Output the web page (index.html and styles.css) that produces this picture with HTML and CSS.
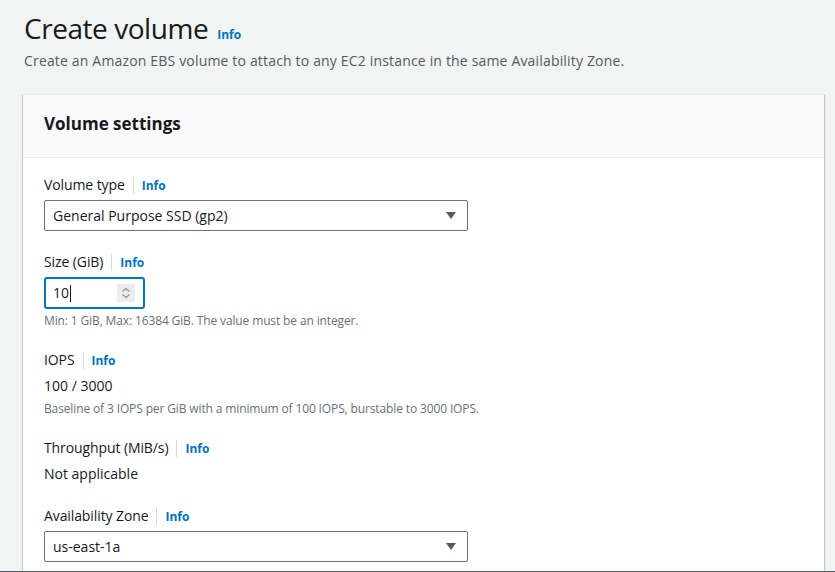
FILE: index.html
```html
<!DOCTYPE html>
<html lang="en">
<head>
<meta charset="utf-8">
<title>Create volume</title>
<link rel="stylesheet" href="styles.css">
</head>
<body>
<div class="app">
  <main class="content">
    <header class="page-head">
      <h1 class="title">Create volume <a class="info info-title" href="#">Info</a></h1>
      <p class="desc">Create an Amazon EBS volume to attach to any EC2 instance in the same Availability Zone.</p>
    </header>
    <section class="card">
      <div class="card-head">
        <h2 class="card-title">Volume settings</h2>
      </div>
      <div class="card-body">
        <div class="field">
          <div class="label-row"><span class="label">Volume type</span><span class="divider"></span><a class="info" href="#">Info</a></div>
          <div class="select">
            <span class="select-text">General Purpose SSD (gp2)</span>
            <svg class="caret" width="10" height="7" viewBox="0 0 10 7"><path d="M0 0H10L5 7Z" fill="#545b64"/></svg>
          </div>
        </div>
        <div class="field">
          <div class="label-row"><span class="label">Size (GiB)</span><span class="divider"></span><a class="info" href="#">Info</a></div>
          <div class="input focused">
            <span class="input-text">10</span><span class="cursor"></span>
            <span class="spinner">
              <svg width="18" height="18" viewBox="0 0 18 18"><path d="M5.5 7.5L9 4.5L12.5 7.5M5.5 10.5L9 13.5L12.5 10.5" fill="none" stroke="#879596" stroke-width="1.2"/></svg>
            </span>
          </div>
          <div class="hint">Min: 1 GiB, Max: 16384 GiB. The value must be an integer.</div>
        </div>
        <div class="field">
          <div class="label-row"><span class="label">IOPS</span><span class="divider"></span><a class="info" href="#">Info</a></div>
          <div class="value">100 / 3000</div>
          <div class="hint">Baseline of 3 IOPS per GiB with a minimum of 100 IOPS, burstable to 3000 IOPS.</div>
        </div>
        <div class="field">
          <div class="label-row"><span class="label">Throughput (MiB/s)</span><span class="divider"></span><a class="info" href="#">Info</a></div>
          <div class="value">Not applicable</div>
        </div>
        <div class="field">
          <div class="label-row"><span class="label">Availability Zone</span><span class="divider"></span><a class="info" href="#">Info</a></div>
          <div class="select">
            <span class="select-text">us-east-1a</span>
            <svg class="caret" width="10" height="7" viewBox="0 0 10 7"><path d="M0 0H10L5 7Z" fill="#545b64"/></svg>
          </div>
        </div>
      </div>
    </section>
  </main>
  <footer class="footer"></footer>
</div>
</body>
</html>
```

FILE: styles.css
```css
* { box-sizing: border-box; }
html, body { margin: 0; padding: 0; }
body {
  background: #f2f3f3;
  font-family: "Open Sans", "Noto Sans", sans-serif;
  color: #16191f;
}
.app {
  height: 100vh;
  display: flex;
  flex-direction: column;
}
.content {
  flex: 1;
  overflow: hidden;
  padding: 10px 11px 0 24px;
}
.page-head { margin: 0; }
.title {
  margin: 0;
  height: 36px;
  font-size: 28px;
  line-height: 36px;
  font-weight: 400;
  letter-spacing: -0.45px;
  color: #16191f;
  display: flex;
  align-items: baseline;
  gap: 9px;
}
.info {
  font-size: 12px;
  line-height: 16px;
  font-weight: 700;
  letter-spacing: 0;
  color: #0073bb;
  text-decoration: none;
}
.desc {
  margin: 4px 0 0;
  font-size: 14px;
  line-height: 22px;
  letter-spacing: 0.17px;
  color: #545b64;
}
.card {
  margin: 22px 0 0 -1px;
  background: #fff;
  box-shadow: 0 1px 1px 0 rgba(0,28,36,.3), 1px 1px 1px 0 rgba(0,28,36,.15), -1px 1px 1px 0 rgba(0,28,36,.15);
  border-top: 1px solid #eaeded;
}
.card-head {
  background: #fafafa;
  border-bottom: 1px solid #eaeded;
  padding: 15px 20px 19px 21px;
}
.card-title {
  margin: 0;
  font-size: 17px;
  line-height: 28px;
  font-weight: 700;
  color: #16191f;
}
.card-body {
  padding: 16px 20px 20px 21px;
  display: flex;
  flex-direction: column;
  gap: 20px;
}
.field {
  display: flex;
  flex-direction: column;
  gap: 4px;
}
.label-row {
  display: flex;
  align-items: center;
  height: 22px;
}
.label-row .info {
  padding-top: 2px;
}
.label {
  font-size: 14px;
  line-height: 22px;
  letter-spacing: -0.1px;
  color: #16191f;
}
.divider {
  width: 1px;
  height: 17px;
  background: #d5dbdb;
  margin: 0 8px;
}
.select {
  width: 424px;
  height: 31px;
  border: 1px solid #687078;
  border-radius: 2px;
  background: #fff;
  display: flex;
  align-items: center;
  justify-content: space-between;
  padding: 0 11px 0 8px;
}
.select-text {
  font-size: 14px;
  line-height: 22px;
  color: #16191f;
}
.input {
  width: 101px;
  height: 32px;
  border: 2px solid #0073bb;
  border-radius: 3px;
  display: flex;
  align-items: center;
  padding: 0 8px 0 7px;
  background: #fff;
}
.input-text {
  font-size: 14px;
  line-height: 22px;
  color: #16191f;
}
.cursor {
  width: 1px;
  height: 17px;
  background: #16191f;
  margin-left: 1px;
}
.spinner {
  margin-left: auto;
  width: 18px;
  height: 18px;
  background: #e9ebed;
  display: flex;
}
.hint {
  font-size: 12px;
  line-height: 16px;
  letter-spacing: -0.13px;
  color: #687078;
}
.value {
  font-size: 14px;
  line-height: 22px;
  color: #16191f;
}
.footer {
  height: 1px;
  background: #545b64;
  flex-shrink: 0;
}
```
